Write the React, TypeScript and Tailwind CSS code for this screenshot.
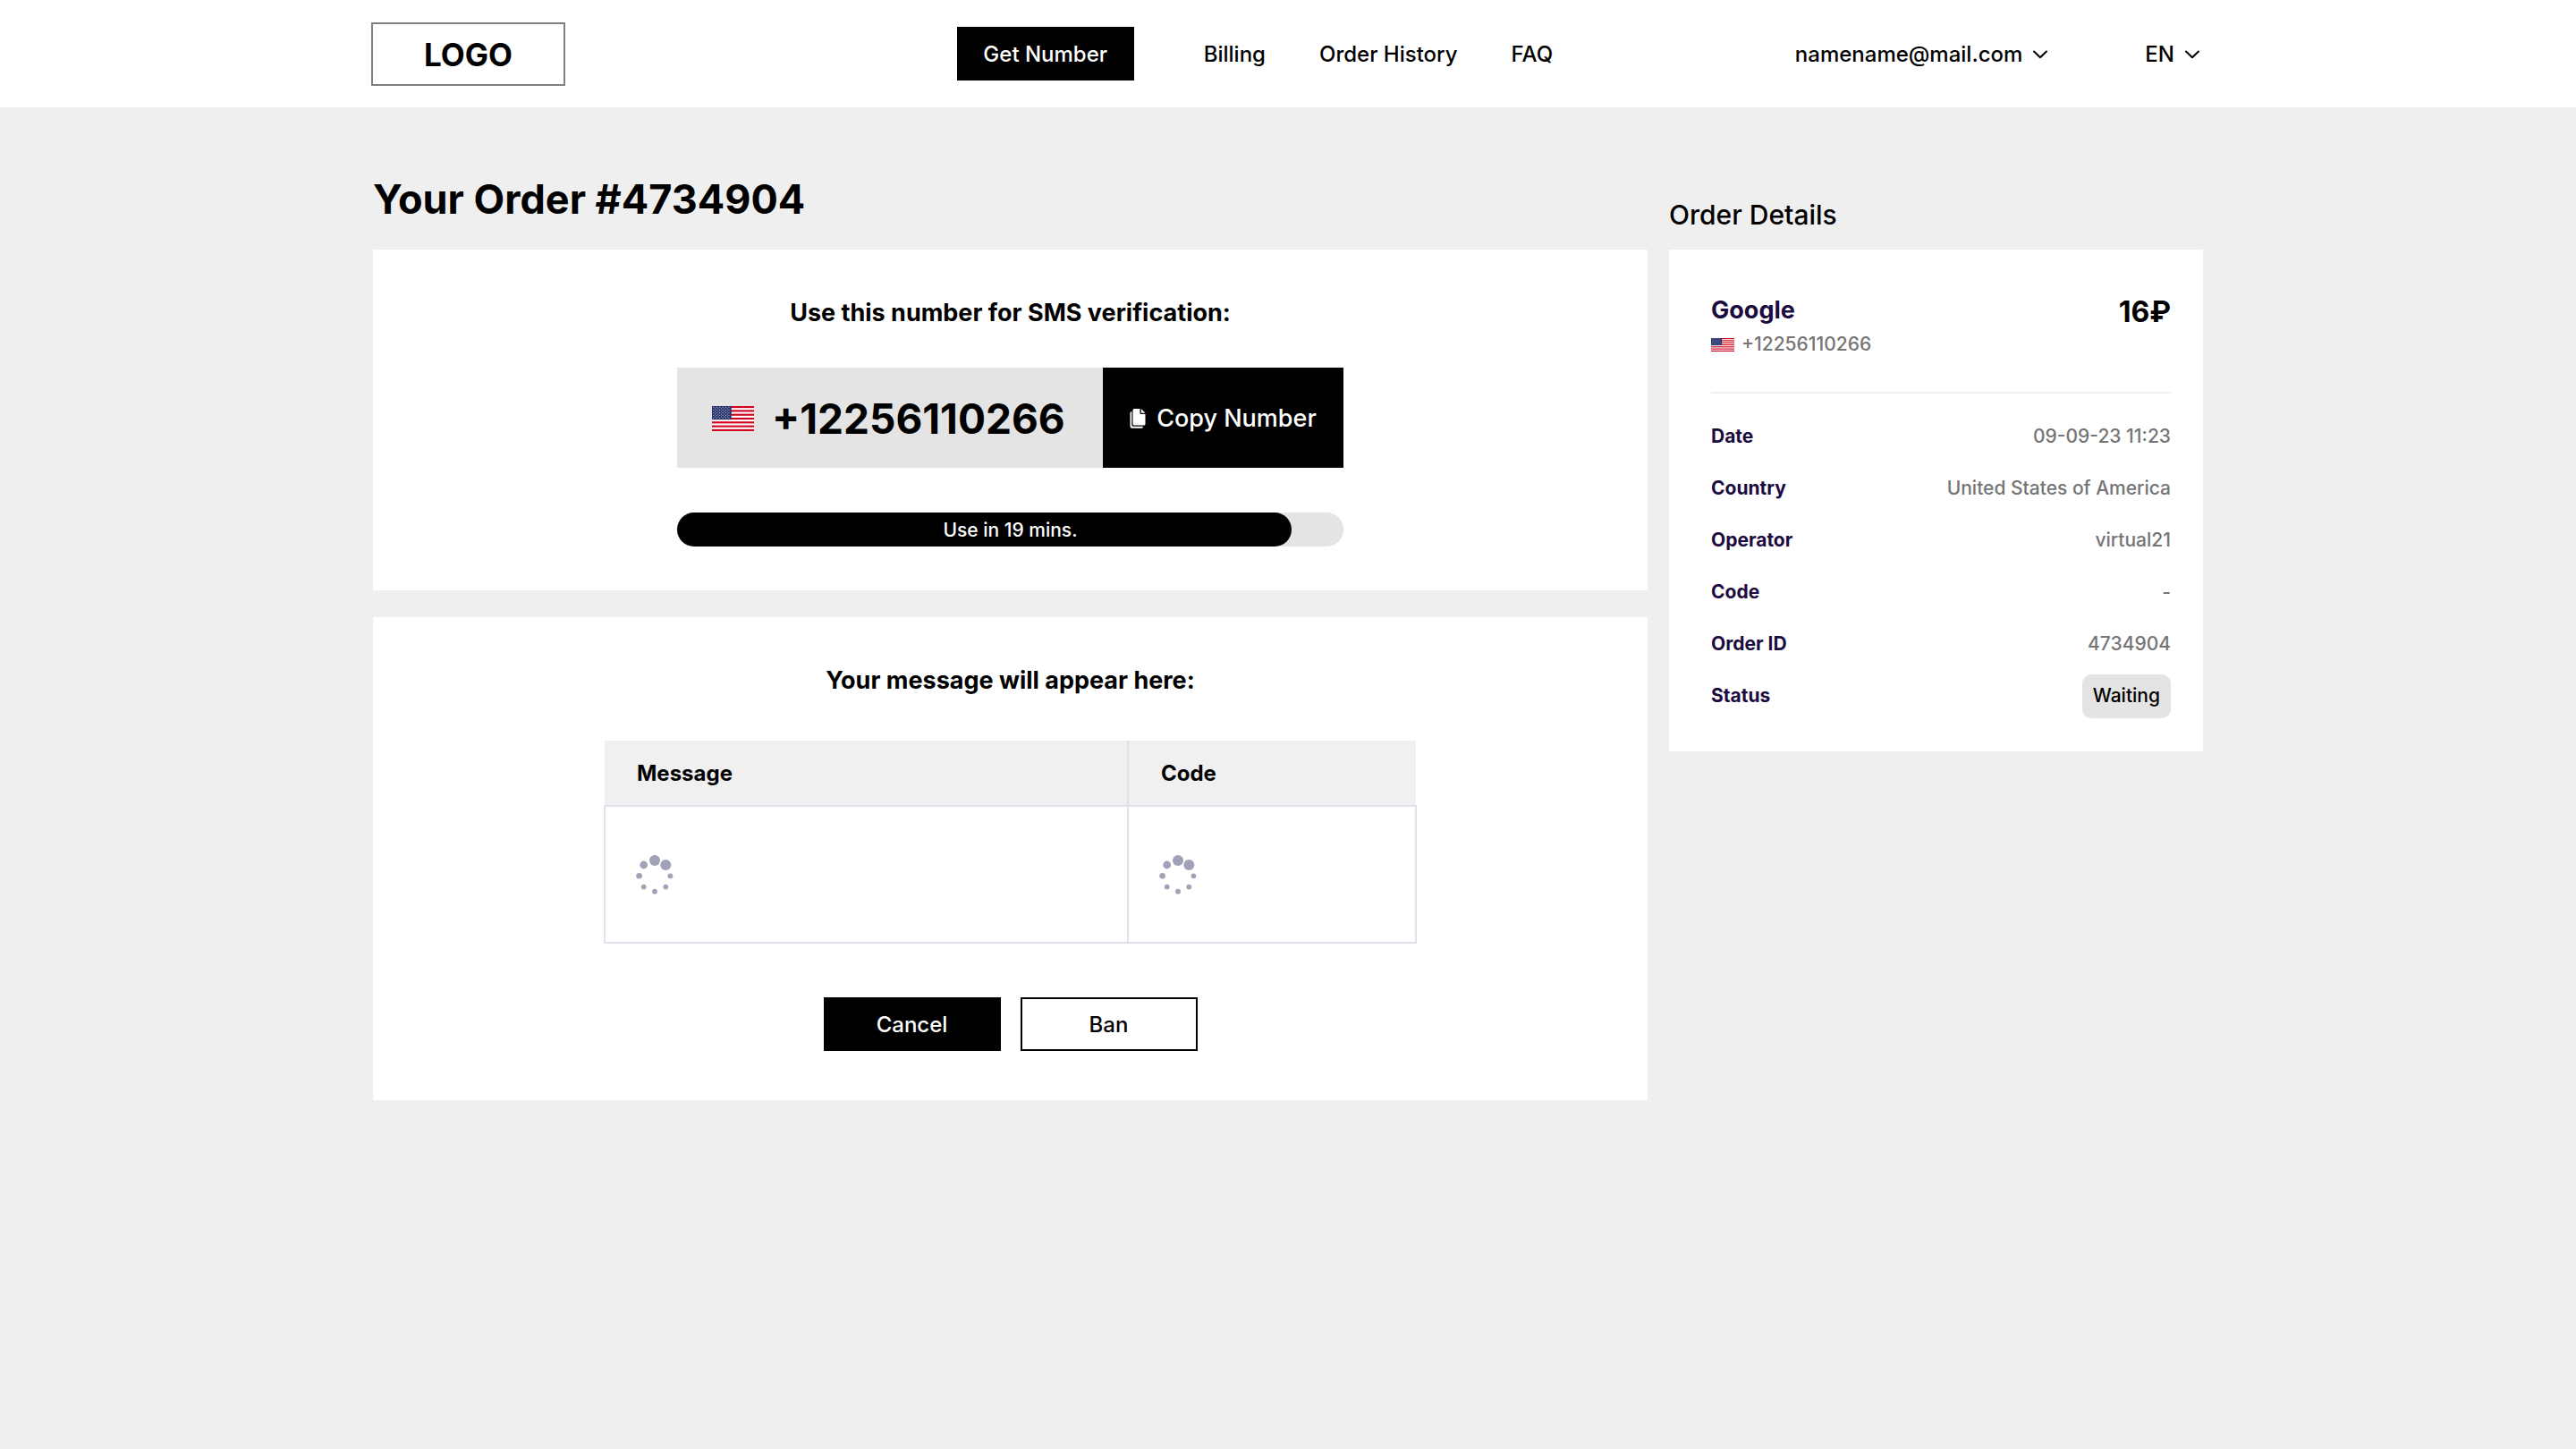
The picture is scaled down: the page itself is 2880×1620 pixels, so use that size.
import type { ReactNode } from "react";

const details = [
    { label: "Date", value: "09-09-23 11:23" },
    { label: "Country", value: "United States of America" },
    { label: "Operator", value: "virtual21" },
    { label: "Code", value: "-" },
    { label: "Order ID", value: "4734904" }
];

const links = ["Billing", "Order History", "FAQ"];

const TOTAL_WIDTH = 745;
const LEFT_WIDTH = 687;

function Flag({ className }: { className: string }) {
    const stars = [];
    for (let row = 0; row < 9; row++) {
        for (let col = row % 2; col < 11; col += 2) {
            stars.push(
                <circle key={row + "-" + col} cx={2 + col * 1.9} cy={1.4 + row * 1.5} r="0.6" />
            );
        }
    }

    return (
        <svg
            viewBox="0 0 52 28"
            preserveAspectRatio="none"
            className={className}
            role="img"
            aria-label="USA"
        >
            <rect width="52" height="28" fill="#fff" />
            <g fill="#d0021f">
                {[0, 2, 4, 6, 8, 10, 12].map((n) => (
                    <rect key={n} y={(n * 28) / 13} width="52" height={28 / 13} />
                ))}
            </g>
            <rect width="24" height={(28 / 13) * 7} fill="#26346a" />
            <g fill="#b9bed2">{stars}</g>
        </svg>
    );
}

function Chevron() {
    return (
        <svg viewBox="0 0 16 10" className="h-[10px] w-4" fill="none" aria-hidden="true">
            <path
                d="M1 1.5 8 8.3 15 1.5"
                stroke="#000"
                strokeWidth="2"
                strokeLinecap="round"
                strokeLinejoin="round"
            />
        </svg>
    );
}

function CopyIcon() {
    return (
        <svg viewBox="0 0 18 22" className="h-[22px] w-[18px]" fill="currentColor" aria-hidden="true">
            <path d="M5 0h6.500v4.500A1.500 1.500 0 0 0 13 6h4.500v11a1.500 1.500 0 0 1-1.500 1.500H5A1.500 1.500 0 0 1 3.500 17V1.500A1.500 1.500 0 0 1 5 0Z" />
            <path d="M12.800 0 17.500 4.700h-4.700Z" />
            <path d="M2.300 3V18a1.700 1.700 0 0 0 1.700 1.700h11v.3a1.800 1.800 0 0 1-1.800 1.800H2.500A2 2 0 0 1 .5 19.800V4.800A1.800 1.800 0 0 1 2.300 3Z" />
        </svg>
    );
}

function Spinner() {
    return (
        <svg viewBox="0 0 44 44" className="block size-11" fill="#a0a3b8" aria-hidden="true">
            <circle cx="22" cy="6" r="6" />
            <circle cx="34.300" cy="11" r="6" />
            <circle cx="9.700" cy="11" r="4.400" />
            <circle cx="4.600" cy="23.300" r="3.300" />
            <circle cx="39.400" cy="23.300" r="2.900" />
            <circle cx="9.700" cy="35.600" r="2.900" />
            <circle cx="34.300" cy="35.600" r="2.900" />
            <circle cx="22" cy="40.700" r="2.900" />
        </svg>
    );
}

function Header() {
    return (
        <header className="bg-white">
            <div className="mx-auto flex h-[120px] max-w-[2050px] items-center justify-between pr-1.5">
                <a
                    href="#"
                    className="flex h-[71px] w-[217px] items-center justify-center border-2 border-[#808080] pt-0.5 text-[35px] font-bold"
                >
                    LOGO
                </a>

                <nav className="ml-[167px] flex items-center gap-[60px]">
                    <a
                        href="#"
                        className="mr-[18px] flex h-[60px] w-[198px] items-center justify-center bg-black pt-0.5 text-white"
                    >
                        Get Number
                    </a>
                    {links.map((link) => (
                        <a key={link} href="#" className="pt-0.5">
                            {link}
                        </a>
                    ))}
                </nav>

                <div className="flex items-center gap-[109px]">
                    <button type="button" className="flex items-center gap-3 pt-0.5">
                        namename@mail.com
                        <Chevron />
                    </button>
                    <button type="button" className="flex items-center gap-3 pt-0.5">
                        EN
                        <Chevron />
                    </button>
                </div>
            </div>
        </header>
    );
}

function Card({ title, children }: { title: string; children: ReactNode }) {
    return (
        <section className="flex flex-col items-center bg-white pt-[53px]">
            <h2 className="text-[27px] leading-9 font-bold">{title}</h2>
            {children}
        </section>
    );
}

export default function App() {
    return (
        <div className="min-h-screen bg-[#efefef] font-['Inter',sans-serif] text-[24px] font-medium text-black">
            <Header />

            <main className="mx-auto grid max-w-[2046px] grid-cols-[1fr_597px] gap-x-6 pt-[73px]">
                <h1 className="mb-[26px] text-[45px] leading-[60px] font-bold">Your Order #4734904</h1>
                <h2 className="mb-[21px] self-end text-[30px] leading-9">Order Details</h2>

                <div className="flex flex-col gap-[30px]">
                    <Card title="Use this number for SMS verification:">
                        <div className="mt-[43px] flex h-[112px] w-[745px]">
                            <div className="flex flex-1 items-center gap-5 bg-[#e4e4e4] pt-0.5 pl-[39px]">
                                <Flag className="h-7 w-[47px]" />
                                <span className="text-[46px] font-bold">+12256110266</span>
                            </div>
                            <button
                                type="button"
                                className="flex w-[269px] items-center justify-center gap-3 bg-black pt-0.5 text-[27px] text-white"
                            >
                                <CopyIcon />
                                Copy Number
                            </button>
                        </div>

                        <div className="relative mt-[50px] mb-[49px] h-[38px] w-[745px] rounded-full bg-[#e4e4e4]">
                            <div
                                className="h-full rounded-full bg-black"
                                style={{ width: (LEFT_WIDTH / TOTAL_WIDTH) * 100 + "%" }}
                            />
                            <span className="absolute inset-0 flex items-center justify-center pt-0.5 text-[21px] text-white">
                                Use in 19 mins.
                            </span>
                        </div>
                    </Card>

                    <Card title="Your message will appear here:">
                        <table className="mt-[49px] w-[909px] border-collapse text-left">
                            <thead className="bg-[#f0f0f0]">
                                <tr className="h-[73px]">
                                    <th className="w-[585px] border-r-2 border-[#e1e3ec] pt-0.5 pl-9 font-bold">Message</th>
                                    <th className="pt-0.5 pl-9 font-bold">Code</th>
                                </tr>
                            </thead>
                            <tbody>
                                <tr className="h-[153px]">
                                    <td className="border-2 border-[#e1e3ec] pl-[33px]">
                                        <Spinner />
                                    </td>
                                    <td className="border-2 border-[#e1e3ec] pl-[33px]">
                                        <Spinner />
                                    </td>
                                </tr>
                            </tbody>
                        </table>

                        <div className="mt-[60px] mb-[55px] flex gap-[22px]">
                            <button type="button" className="h-[60px] w-[198px] bg-black pt-0.5 text-white">
                                Cancel
                            </button>
                            <button type="button" className="h-[60px] w-[198px] border-2 border-black pt-0.5">
                                Ban
                            </button>
                        </div>
                    </Card>
                </div>

                <aside className="self-start bg-white pt-[50px] pr-9 pb-[33px] pl-[47px] text-[21px]">
                    <div className="flex justify-between">
                        <div>
                            <h3 className="text-[27px] leading-9 font-bold text-[#1b0b40]">Google</h3>
                            <p className="mt-[5px] flex items-center gap-2 leading-[30px] text-[#757575]">
                                <Flag className="h-[15px] w-[26px]" />
                                +12256110266
                            </p>
                        </div>
                        <span className="text-[32px] leading-10 font-bold">16₽</span>
                    </div>

                    <dl className="mt-[38px] border-t-2 border-[#edf2f7] pt-[19px]">
                        {details.map((item) => (
                            <div key={item.label} className="flex h-[58px] items-center justify-between">
                                <dt className="font-bold text-[#1b0b40]">{item.label}</dt>
                                <dd className="text-[#757575]">{item.value}</dd>
                            </div>
                        ))}
                        <div className="flex h-[58px] items-center justify-between">
                            <dt className="font-bold text-[#1b0b40]">Status</dt>
                            <dd className="flex h-[49px] items-center rounded-[10px] bg-[#e4e4e4] px-3">Waiting</dd>
                        </div>
                    </dl>
                </aside>
            </main>
        </div>
    );
}
